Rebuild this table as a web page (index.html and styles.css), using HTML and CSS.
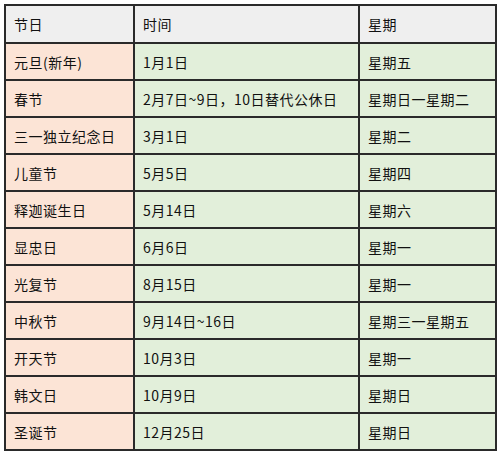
FILE: index.html
```html
<!DOCTYPE html>
<html lang="zh">
<head>
<meta charset="utf-8">
<link rel="stylesheet" href="styles.css">
</head>
<body>
<table class="holidays">
  <colgroup>
    <col class="c-name">
    <col class="c-date">
    <col class="c-day">
  </colgroup>
  <thead>
    <tr><th>节日</th><th>时间</th><th>星期</th></tr>
  </thead>
  <tbody>
    <tr><td class="name">元旦(新年)</td><td>1月1日</td><td>星期五</td></tr>
    <tr><td class="name">春节</td><td>2月7日~9日，10日替代公休日</td><td>星期日一星期二</td></tr>
    <tr><td class="name">三一独立纪念日</td><td>3月1日</td><td>星期二</td></tr>
    <tr><td class="name">儿童节</td><td>5月5日</td><td>星期四</td></tr>
    <tr><td class="name">释迦诞生日</td><td>5月14日</td><td>星期六</td></tr>
    <tr><td class="name">显忠日</td><td>6月6日</td><td>星期一</td></tr>
    <tr><td class="name">光复节</td><td>8月15日</td><td>星期一</td></tr>
    <tr><td class="name">中秋节</td><td>9月14日~16日</td><td>星期三一星期五</td></tr>
    <tr><td class="name">开天节</td><td>10月3日</td><td>星期一</td></tr>
    <tr><td class="name">韩文日</td><td>10月9日</td><td>星期日</td></tr>
    <tr><td class="name">圣诞节</td><td>12月25日</td><td>星期日</td></tr>
  </tbody>
</table>
</body>
</html>
```
FILE: styles.css
```css
html, body {
  margin: 0;
  padding: 0;
  background: #ffffff;
}
body {
  padding: 4px;
  font-family: "Noto Sans CJK SC", "Noto Sans", sans-serif;
  font-size: 14px;
  color: #111;
}
.holidays {
  border-collapse: collapse;
  width: 491px;
  table-layout: fixed;
}
.c-name { width: 129px; }
.c-date { width: 225px; }
.c-day { width: 137px; }
.holidays th,
.holidays td {
  border: 2px solid #2a2a2a;
  padding: 0 8px;
  text-align: left;
  font-weight: normal;
  height: 35px;
  white-space: nowrap;
  letter-spacing: 0.5px;
}
.holidays th {
  background: #efefef;
  height: 36px;
}
.holidays td {
  background: #e2efda;
}
.holidays td.name {
  background: #fce4d6;
}
```
